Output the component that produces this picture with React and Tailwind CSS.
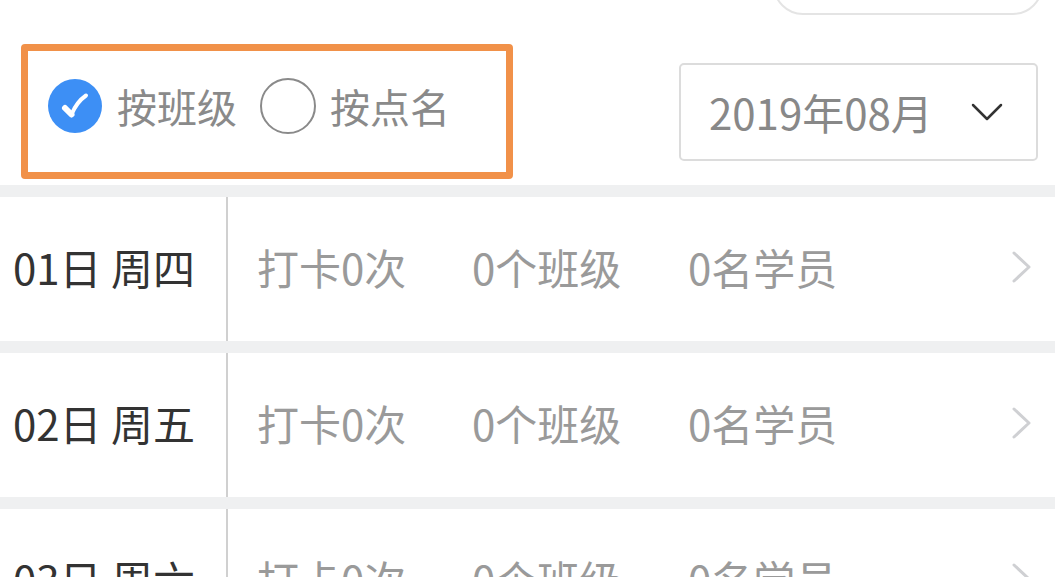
const days = [
  { date: "01日 周四" },
  { date: "02日 周五" },
  { date: "03日 周六" },
];

function ChevronRight() {
  return (
    <svg width="22" height="34" viewBox="0 0 22 34" fill="none">
      <path d="M3 3l15 14L3 31" stroke="#cfd0d3" strokeWidth="3" strokeLinecap="round" strokeLinejoin="round" />
    </svg>
  );
}

function DayRow({ item }) {
  return (
    <div className="flex h-[144px] items-stretch bg-white">
      <div className="flex w-[226px] items-center pb-[4px] pl-[13px] text-[42px] leading-none text-[#333]">
        {item.date}
      </div>
      <div className="w-[2px] bg-[#d0d0d0]" />
      <div className="flex flex-1 items-center pb-[4px] pl-[29px] text-[42px] leading-none text-[#9a9a9a]">
        <span className="w-[215px]">打卡0次</span>
        <span className="w-[216px]">0个班级</span>
        <span className="flex-1">0名学员</span>
        <span className="mr-[22px]"><ChevronRight /></span>
      </div>
    </div>
  );
}

export default function App() {
  return (
    <div
      className="h-[577px] w-[1055px] overflow-hidden bg-white"
      style={{ fontFamily: '"Noto Sans CJK SC", "Noto Sans", sans-serif' }}
    >
      {/* top pill, cut off by the window */}
      <div className="flex h-[15px] justify-end pr-[12px]">
        <div className="-mt-[45px] h-[60px] w-[270px] rounded-full border-2 border-[#e4e4e4]" />
      </div>

      {/* filter row */}
      <div className="mt-[29px] flex h-[135px] items-center">
        <div className="ml-[21px] flex h-[135px] w-[492px] items-center rounded-[4px] border-[7px] border-[#f19149] pb-[12px] pl-[20px]">
          <span className="flex h-[54px] w-[54px] items-center justify-center rounded-full bg-[#3d8ff5]">
            <svg width="34" height="34" viewBox="0 0 34 34">
              <path d="M7 19l6.5 6.5" stroke="white" strokeWidth="6" strokeLinecap="round" fill="none" />
              <path d="M13.5 25.5C17 17 21.5 11 28 6.5" stroke="white" strokeWidth="4" strokeLinecap="round" fill="none" />
            </svg>
          </span>
          <span className="ml-[15px] text-[40px] leading-none text-[#8a8a8a]">按班级</span>
          <span className="ml-[23px] h-[56px] w-[56px] rounded-full border-2 border-[#8a8a8a]" />
          <span className="ml-[14px] text-[40px] leading-none text-[#8a8a8a]">按点名</span>
        </div>
        <div className="ml-[166px] flex h-[98px] w-[359px] items-center rounded-[5px] border-2 border-[#dcdcdc] pl-[28px]">
          <span className="text-[42px] leading-none text-[#888]">2019年08月</span>
          <svg className="ml-[38px]" width="32" height="18" viewBox="0 0 32 18" fill="none">
            <path d="M2 2l14 14L30 2" stroke="#333" strokeWidth="2.5" strokeLinecap="round" strokeLinejoin="round" />
          </svg>
        </div>
      </div>

      <div className="mt-[6px] flex flex-col gap-[12px] bg-[#eff0f1] pt-[12px]">
        {days.map((d) => (
          <DayRow key={d.date} item={d} />
        ))}
      </div>
    </div>
  );
}
